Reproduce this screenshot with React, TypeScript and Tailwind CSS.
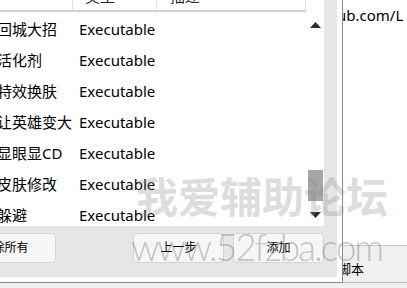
import React from "react";

const rows = [
  { name: "回城大招", type: "Executable" },
  { name: "活化剂", type: "Executable" },
  { name: "特效换肤", type: "Executable" },
  { name: "让英雄变大", type: "Executable" },
  { name: "显眼显CD", type: "Executable" },
  { name: "皮肤修改", type: "Executable" },
  { name: "躲避", type: "Executable" },
];

const font = "font-['Noto_Sans','Noto_Sans_CJK_SC',sans-serif]";

function Arrow({ down }: { down?: boolean }) {
  return (
    <svg width="11" height="6" viewBox="0 0 11 6" className="shrink-0">
      <path d={down ? "M0 0 H11 L5.5 6 Z" : "M0 6 H11 L5.5 0 Z"} fill="#2b2b2b" />
    </svg>
  );
}

function Button({ label, className = "" }: { label: string; className?: string }) {
  return (
    <button className={`h-[30px] w-[91px] shrink-0 rounded-[4px] border border-[#d3d3d3] bg-[#f6f6f6] text-[12px] text-black ${className}`}>
      {label}
    </button>
  );
}

function Dialog() {
  return (
    <div className="relative z-10 h-[283px] w-[343px] shrink-0 border-r border-b border-[#888888] bg-white pr-[5px] pb-[5px]">
      <div className="flex h-full flex-col bg-[#e6e6e6]">
        <div className="flex h-[226px] w-[324px] overflow-hidden bg-white">
          <div className="flex w-[306px] flex-col">
            <div className="flex h-[12px] shrink-0 overflow-hidden border-b-2 border-[#d2d2d2] text-[15px] text-[#222]">
              <div className="w-[73px] shrink-0 border-r border-[#e3e3e3]" />
              <div className="w-[84px] shrink-0 border-r border-[#e3e3e3] pl-[12px]">
                <span className="-mt-[14px] block leading-[20px]">类型</span>
              </div>
              <div className="flex-1 border-r border-[#e3e3e3] pl-[13px]">
                <span className="-mt-[14px] block leading-[20px]">描述</span>
              </div>
            </div>
            <div className="flex flex-col pt-[2px] text-[15px] text-black">
              {rows.map((r) => (
                <div key={r.name} className="flex h-[31px] shrink-0 items-center">
                  <div className="w-[73px] shrink-0 whitespace-nowrap">
                    <span className="-ml-[3px] block">{r.name}</span>
                  </div>
                  <div className="pl-[6px]">{r.type}</div>
                </div>
              ))}
            </div>
          </div>
          <div className="flex w-[18px] flex-col items-center pt-[22px] pb-[8px]">
            <Arrow />
            <div className="flex w-full flex-1 flex-col items-end justify-end pr-[1px] pb-[11px]">
              <div className="h-[31px] w-[15px] bg-[#a6a6a6]" />
            </div>
            <Arrow down />
          </div>
        </div>
        <div className="flex w-[324px] items-start justify-between pt-[7px]">
          <Button label="除所有" className="-ml-[35px]" />
          <div className="flex gap-[9px]">
            <Button label="上一步" />
            <Button label="添加" />
          </div>
        </div>
      </div>
    </div>
  );
}

function RightPanel() {
  return (
    <div className="-ml-[6px] flex h-[283px] min-w-0 flex-1 flex-col border-b border-[#bdbdbd]">
      <div className="h-[246px] shrink-0 border-b border-[#c9c9c9] bg-white pt-[4px] text-[15px] text-black">
        <div className="whitespace-nowrap">ub.com/L</div>
      </div>
      <div className="flex-1 bg-[#f0f0f0] pt-[14px] text-[13px] text-black">
        <div className="whitespace-nowrap pl-[1px]">脚本</div>
      </div>
    </div>
  );
}

export default function App() {
  return (
    <div className={`relative h-[288px] w-[407px] overflow-hidden bg-[#f0f0f0] ${font}`}>
      <div className="flex">
        <Dialog />
        <RightPanel />
      </div>
      <div className="pointer-events-none absolute left-[136px] top-[174px] z-20 whitespace-nowrap text-[42px] font-bold leading-none text-[rgba(135,135,135,0.3)] font-['Noto_Sans_CJK_SC',sans-serif]">
        我爱辅助论坛
      </div>
      <div className="pointer-events-none absolute left-[131px] top-[228px] z-20 whitespace-nowrap text-[37px] font-light leading-none tracking-[-2px] text-[rgba(110,110,110,0.4)] font-['Lato',sans-serif]">
        www.52fzba.com
      </div>
    </div>
  );
}
